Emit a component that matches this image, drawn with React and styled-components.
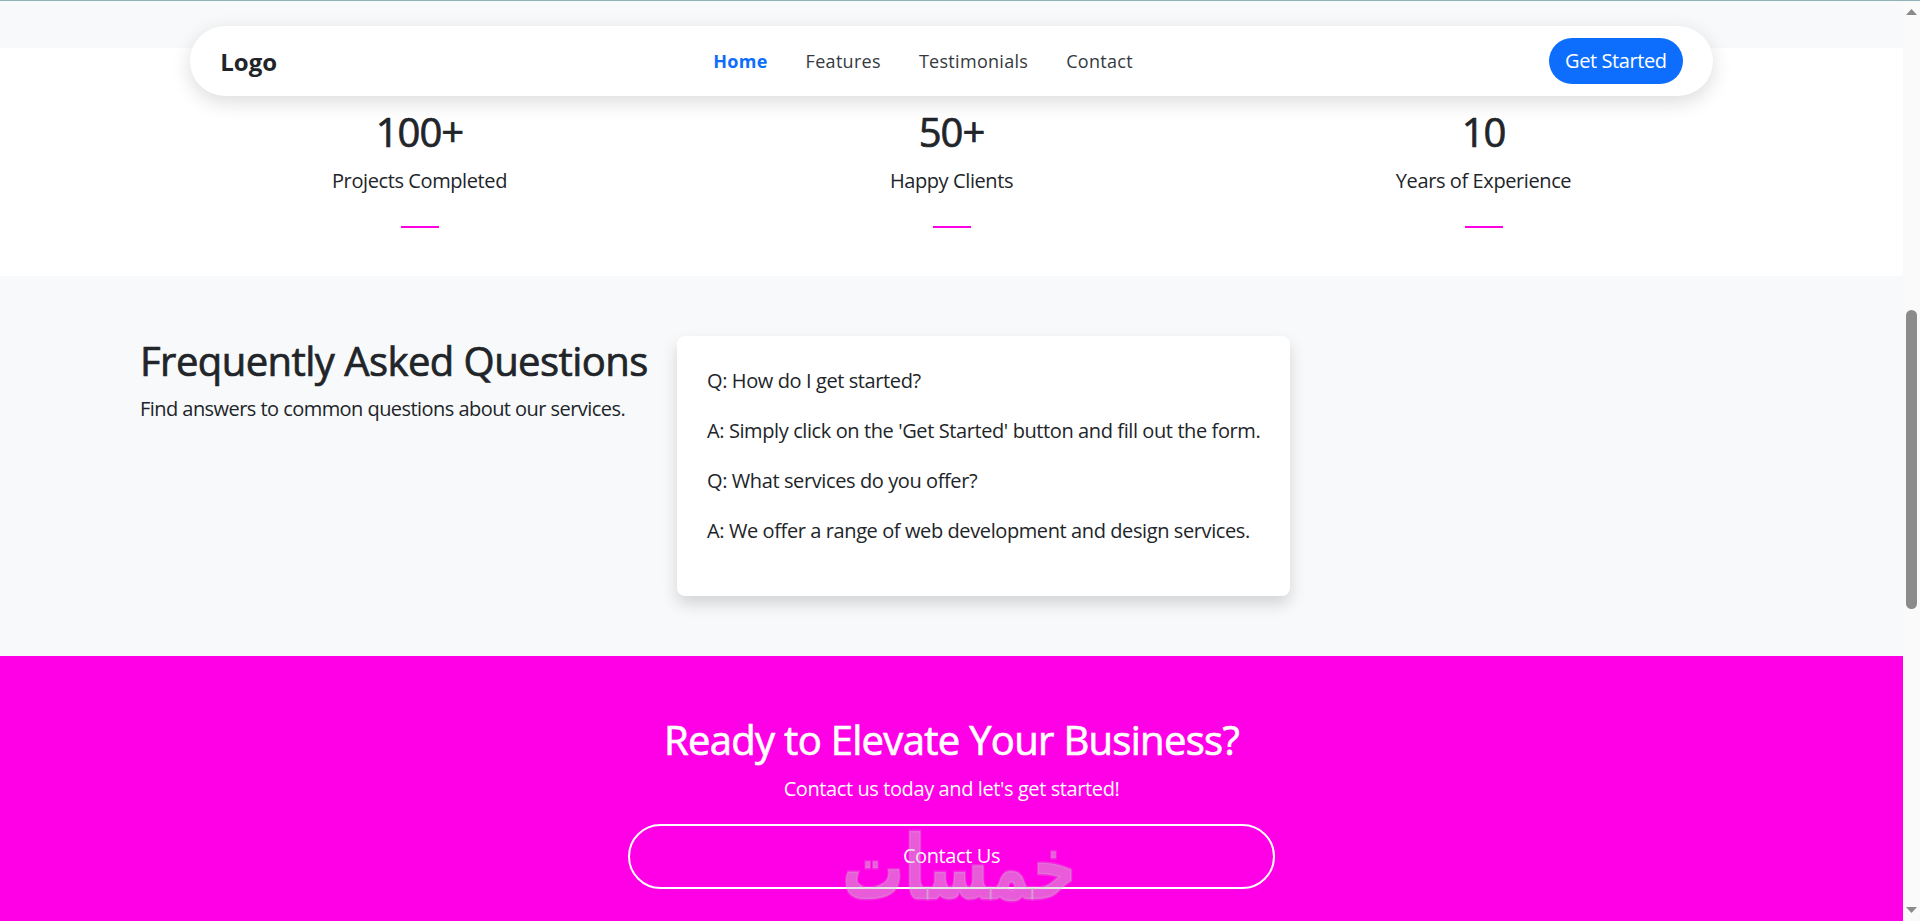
import React from 'react';
import styled, { createGlobalStyle } from 'styled-components';

const GlobalStyle = createGlobalStyle`
  *, *::before, *::after { box-sizing: border-box; }
  html, body { margin: 0; padding: 0; height: 100%; overflow: hidden; }
  body {
    font-family: "Open Sans", "Noto Sans", "Liberation Sans", sans-serif;
    color: #212529;
    background: #ffffff;
  }
  #root { height: 100%; }
`;

const MAGENTA = '#ff00e6';

const Frame = styled.div`
  width: 1920px;
  height: 921px;
  display: flex;
  flex-direction: column;
  border-top: 1px solid #8fb2b9;
`;

const Viewport = styled.div`
  flex: 1;
  min-height: 0;
  display: flex;
`;

const Page = styled.main`
  position: relative;
  flex: 1;
  min-width: 0;
  overflow: hidden;
  display: flex;
  flex-direction: column;
`;

const TopStrip = styled.div`
  height: 47px;
  flex: none;
  background: #f8f9fa;
`;

const Navbar = styled.nav`
  position: absolute;
  top: 25px;
  left: 10%;
  width: 80%;
  height: 70px;
  padding: 0 30px;
  display: flex;
  align-items: center;
  justify-content: space-between;
  background: #ffffff;
  border-radius: 50px;
  box-shadow: 0 6px 20px rgba(0, 0, 0, 0.14);
  z-index: 10;
`;

const Brand = styled.a`
  font-size: 24px;
  font-weight: 700;
  color: #212529;
  text-decoration: none;
`;

const NavList = styled.ul`
  list-style: none;
  display: flex;
  margin: 0;
  padding: 0 0 0 20px;
`;

const NavLink = styled.a`
  display: block;
  padding: 8px 19px;
  font-size: 18px;
  line-height: 27px;
  text-decoration: none;
  letter-spacing: 0.3px;
  color: ${(p) => (p.$active ? '#0d6efd' : '#343a40')};
  font-weight: ${(p) => (p.$active ? 700 : 400)};
`;

const PrimaryButton = styled.button`
  border: none;
  background: #0d6efd;
  color: #ffffff;
  font-family: inherit;
  font-size: 20px;
  line-height: 30px;
  padding: 8px 16px;
  border-radius: 50px;
  letter-spacing: -0.4px;
`;

/* ---------- Stats ---------- */
const StatsSection = styled.section`
  flex: none;
  padding: 60px 0 48px;
`;

const StatsGrid = styled.div`
  max-width: 1596px;
  margin: 0 auto;
  display: grid;
  grid-template-columns: repeat(3, 1fr);
`;

const Stat = styled.div`
  text-align: center;
`;

const StatNumber = styled.h2`
  margin: 0 0 10px;
  font-size: 40px;
  line-height: 48px;
  font-weight: 400;
  letter-spacing: -1px;
  -webkit-text-stroke: 0.7px currentColor;
`;

const StatLabel = styled.p`
  margin: 0 0 30px;
  font-size: 20px;
  line-height: 30px;
  letter-spacing: -0.4px;
`;

const Accent = styled.div`
  width: 38px;
  height: 2px;
  margin: 0 auto;
  background: ${MAGENTA};
`;

/* ---------- FAQ ---------- */
const FaqSection = styled.section`
  flex: none;
  background: #f8f9fa;
  padding: 60px 0 60px 140px;
  display: flex;
  align-items: flex-start;
  gap: 29px;
`;

const FaqIntro = styled.div`
  width: 508px;
  flex: none;
`;

const FaqTitle = styled.h2`
  margin: 0 0 8px;
  font-size: 40px;
  line-height: 50px;
  font-weight: 400;
  white-space: nowrap;
  letter-spacing: -0.55px;
  -webkit-text-stroke: 0.7px currentColor;
`;

const FaqLead = styled.p`
  margin: 0;
  font-size: 20px;
  line-height: 30px;
  white-space: nowrap;
  letter-spacing: -0.55px;
`;

const FaqCard = styled.div`
  width: 613px;
  flex: none;
  background: #ffffff;
  border-radius: 8px;
  padding: 30px;
  box-shadow: 0 8px 16px rgba(0, 0, 0, 0.15);
`;

const FaqLine = styled.p`
  margin: 0 0 20px;
  font-size: 20px;
  line-height: 30px;
  white-space: nowrap;
  letter-spacing: -0.4px;
`;

/* ---------- CTA ---------- */
const CtaSection = styled.section`
  flex: 1;
  background: ${MAGENTA};
  color: #ffffff;
  text-align: center;
  padding-top: 60px;
  display: flex;
  flex-direction: column;
  align-items: center;
`;

const CtaTitle = styled.h2`
  margin: 0 0 10px;
  font-size: 40px;
  line-height: 48px;
  font-weight: 400;
  letter-spacing: -0.7px;
  -webkit-text-stroke: 0.7px currentColor;
`;

const CtaText = styled.p`
  margin: 0 0 20px;
  font-size: 20px;
  line-height: 30px;
  letter-spacing: -0.4px;
`;

const OutlineButton = styled.button`
  width: 647px;
  padding: 15px 0 16px;
  border: 2px solid #ffffff;
  border-radius: 50px;
  background: transparent;
  color: #ffffff;
  font-family: inherit;
  font-size: 20px;
  line-height: 30px;
  letter-spacing: -0.4px;
`;

const Watermark = styled.div`
  position: absolute;
  left: 842px;
  top: 828px;
  font-family: "DejaVu Sans", sans-serif;
  font-weight: 700;
  font-size: 62px;
  line-height: 80px;
  color: rgba(205, 205, 205, 0.45);
  -webkit-text-stroke: 2px rgba(205, 205, 205, 0.2);
  transform: scaleY(1.45);
  transform-origin: 50% 52%;
  pointer-events: none;
  direction: rtl;
`;

/* ---------- Scrollbar ---------- */
const Scrollbar = styled.div`
  width: 17px;
  flex: none;
  background: #fafafa;
  display: flex;
  flex-direction: column;
  align-items: center;
  padding: 8px 0 8px;
`;

const Thumb = styled.div`
  width: 11px;
  height: 299px;
  margin-top: 295px;
  border-radius: 6px;
  background: #8b8b8b;
`;

const ArrowIcon = ({ down }) => (
  <svg width="11" height="6" viewBox="0 0 11 6" style={down ? { marginTop: 'auto' } : undefined}>
    <polygon points={down ? '0,0 11,0 5.5,6' : '5.5,0 11,6 0,6'} fill="#8a8a8a" />
  </svg>
);

const stats = [
  { value: '100+', label: 'Projects Completed' },
  { value: '50+', label: 'Happy Clients' },
  { value: '10', label: 'Years of Experience' },
];

const faqs = [
  'Q: How do I get started?',
  "A: Simply click on the 'Get Started' button and fill out the form.",
  'Q: What services do you offer?',
  'A: We offer a range of web development and design services.',
];

export default function App() {
  return (
    <>
      <GlobalStyle />
      <Frame>
        <Viewport>
          <Page>
            <TopStrip />
            <Navbar>
              <Brand href="#">Logo</Brand>
              <NavList>
                <li><NavLink href="#" $active>Home</NavLink></li>
                <li><NavLink href="#">Features</NavLink></li>
                <li><NavLink href="#">Testimonials</NavLink></li>
                <li><NavLink href="#">Contact</NavLink></li>
              </NavList>
              <PrimaryButton>Get Started</PrimaryButton>
            </Navbar>

            <StatsSection>
              <StatsGrid>
                {stats.map((s) => (
                  <Stat key={s.label}>
                    <StatNumber>{s.value}</StatNumber>
                    <StatLabel>{s.label}</StatLabel>
                    <Accent />
                  </Stat>
                ))}
              </StatsGrid>
            </StatsSection>

            <FaqSection>
              <FaqIntro>
                <FaqTitle>Frequently Asked Questions</FaqTitle>
                <FaqLead>Find answers to common questions about our services.</FaqLead>
              </FaqIntro>
              <FaqCard>
                {faqs.map((f) => (
                  <FaqLine key={f}>{f}</FaqLine>
                ))}
              </FaqCard>
            </FaqSection>

            <CtaSection>
              <CtaTitle>Ready to Elevate Your Business?</CtaTitle>
              <CtaText>Contact us today and let's get started!</CtaText>
              <OutlineButton>Contact Us</OutlineButton>
            </CtaSection>

            <Watermark>خمسات</Watermark>
          </Page>
          <Scrollbar>
            <ArrowIcon />
            <Thumb />
            <ArrowIcon down />
          </Scrollbar>
        </Viewport>
      </Frame>
    </>
  );
}
